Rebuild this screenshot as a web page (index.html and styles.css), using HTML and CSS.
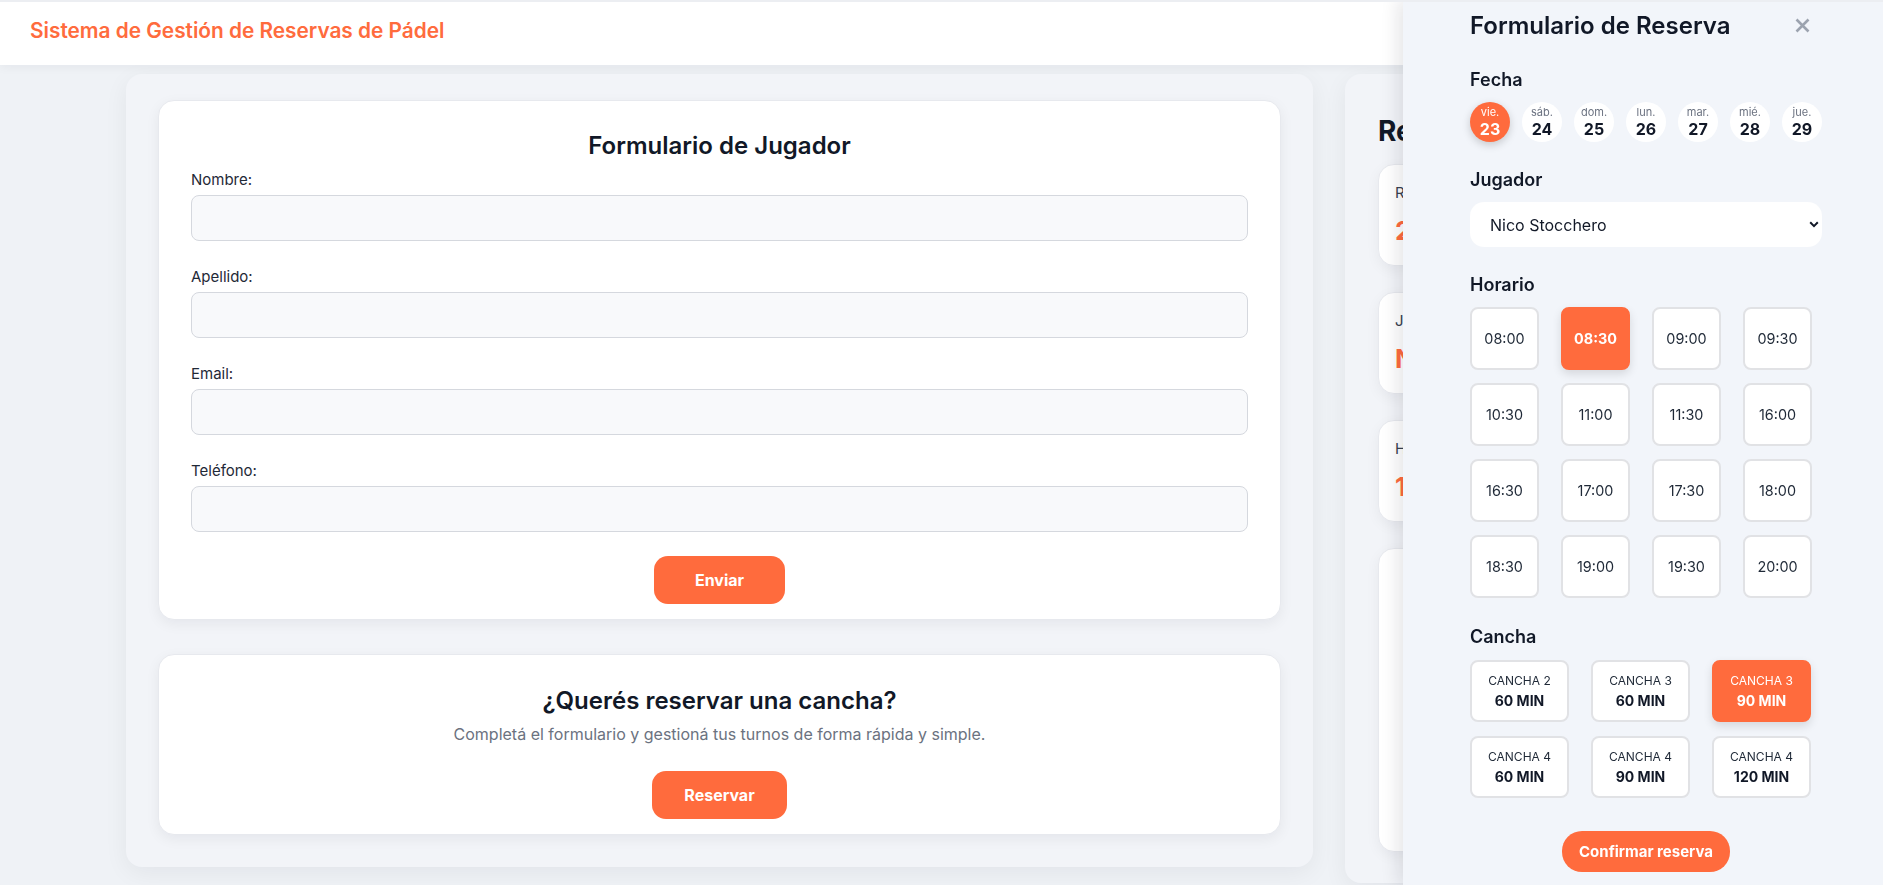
FILE: index.html
```html
<!DOCTYPE html>
<html lang="es">
<head>
<meta charset="utf-8">
<title>Sistema de Gestión de Reservas de Pádel</title>
<link rel="stylesheet" href="styles.css">
</head>
<body>
<header class="topbar">
  <h1 class="brand">Sistema de Gestión de Reservas de Pádel</h1>
</header>

<main class="layout">
  <section class="panel panel-main">
    <div class="card form-card">
      <h2 class="card-title">Formulario de Jugador</h2>
      <form class="player-form">
        <div class="field">
          <label>Nombre:</label>
          <input type="text">
        </div>
        <div class="field">
          <label>Apellido:</label>
          <input type="text">
        </div>
        <div class="field">
          <label>Email:</label>
          <input type="text">
        </div>
        <div class="field">
          <label>Teléfono:</label>
          <input type="text">
        </div>
        <div class="actions">
          <button type="button" class="btn">Enviar</button>
        </div>
      </form>
    </div>

    <div class="card cta-card">
      <h2 class="card-title">¿Querés reservar una cancha?</h2>
      <p class="cta-text">Completá el formulario y gestioná tus turnos de forma rápida y simple.</p>
      <button type="button" class="btn">Reservar</button>
    </div>
  </section>

  <aside class="panel panel-side">
    <h2 class="side-title">Resumen de reserva</h2>
    <div class="stat">
      <div class="stat-label">Reservas activas</div>
      <div class="stat-value">2</div>
    </div>
    <div class="stat">
      <div class="stat-label">Jugador</div>
      <div class="stat-value">Nico Stocchero</div>
    </div>
    <div class="stat">
      <div class="stat-label">Horario</div>
      <div class="stat-value">10:30</div>
    </div>
    <div class="stat stat-big"></div>
  </aside>
</main>

<div class="drawer">
  <div class="drawer-head">
    <h2 class="drawer-title">Formulario de Reserva</h2>
    <button type="button" class="close-btn" aria-label="Cerrar">
      <svg width="15" height="15" viewBox="0 0 15 15"><path d="M1.5 1.5L13.5 13.5M13.5 1.5L1.5 13.5" stroke="#9ca3af" stroke-width="2.6" fill="none"/></svg>
    </button>
  </div>

  <h3 class="section-label first">Fecha</h3>
  <div class="dates">
    <button type="button" class="date is-active"><span class="date-day">vie.</span><span class="date-num">23</span></button>
    <button type="button" class="date"><span class="date-day">sáb.</span><span class="date-num">24</span></button>
    <button type="button" class="date"><span class="date-day">dom.</span><span class="date-num">25</span></button>
    <button type="button" class="date"><span class="date-day">lun.</span><span class="date-num">26</span></button>
    <button type="button" class="date"><span class="date-day">mar.</span><span class="date-num">27</span></button>
    <button type="button" class="date"><span class="date-day">mié.</span><span class="date-num">28</span></button>
    <button type="button" class="date"><span class="date-day">jue.</span><span class="date-num">29</span></button>
  </div>

  <h3 class="section-label">Jugador</h3>
  <select class="player-select">
    <option>Nico Stocchero</option>
  </select>

  <h3 class="section-label">Horario</h3>
  <div class="slots">
    <button type="button" class="slot">08:00</button>
    <button type="button" class="slot is-active">08:30</button>
    <button type="button" class="slot">09:00</button>
    <button type="button" class="slot">09:30</button>
    <button type="button" class="slot">10:30</button>
    <button type="button" class="slot">11:00</button>
    <button type="button" class="slot">11:30</button>
    <button type="button" class="slot">16:00</button>
    <button type="button" class="slot">16:30</button>
    <button type="button" class="slot">17:00</button>
    <button type="button" class="slot">17:30</button>
    <button type="button" class="slot">18:00</button>
    <button type="button" class="slot">18:30</button>
    <button type="button" class="slot">19:00</button>
    <button type="button" class="slot">19:30</button>
    <button type="button" class="slot">20:00</button>
  </div>

  <h3 class="section-label court-label">Cancha</h3>
  <div class="courts">
    <button type="button" class="court"><span class="court-name">Cancha 2</span><span class="court-dur">60 min</span></button>
    <button type="button" class="court"><span class="court-name">Cancha 3</span><span class="court-dur">60 min</span></button>
    <button type="button" class="court is-active"><span class="court-name">Cancha 3</span><span class="court-dur">90 min</span></button>
    <button type="button" class="court"><span class="court-name">Cancha 4</span><span class="court-dur">60 min</span></button>
    <button type="button" class="court"><span class="court-name">Cancha 4</span><span class="court-dur">90 min</span></button>
    <button type="button" class="court"><span class="court-name">Cancha 4</span><span class="court-dur">120 min</span></button>
  </div>

  <div class="confirm-wrap">
    <button type="button" class="btn btn-confirm">Confirmar reserva</button>
  </div>
</div>
</body>
</html>
```

FILE: styles.css
```css
* {
  box-sizing: border-box;
}

html, body {
  height: 100%;
}

body {
  margin: 0;
  font-family: Inter, "Noto Sans", sans-serif;
  background: #eff2f6;
  color: #1f2937;
  overflow: hidden;
}

button, input, select {
  font-family: inherit;
}

body::before {
  content: "";
  position: fixed;
  left: 0;
  top: 0;
  right: 0;
  height: 2px;
  background: #eceef2;
  z-index: 20;
}

/* Header */
.topbar {
  height: 65px;
  padding: 18px 30px 0;
  background: #ffffff;
  box-shadow: 0 2px 10px rgba(15, 23, 42, 0.05);
  position: relative;
  z-index: 1;
}

.brand {
  margin: 0;
  font-size: 20.8px;
  line-height: 25px;
  font-weight: 600;
  color: #ff6b3d;
}

/* Layout */
.layout {
  display: grid;
  grid-template-columns: 1187px 412px;
  column-gap: 32px;
  align-items: start;
  padding: 9px 0 0 126px;
}

.panel {
  background: #f2f4f8;
  border-radius: 16px;
  box-shadow: 0 6px 24px rgba(15, 23, 42, 0.06);
}

.panel-main {
  padding: 26px 32px 32px;
  display: flex;
  flex-direction: column;
  gap: 34px;
}

.card {
  background: #ffffff;
  border: 1px solid #e7e9ee;
  border-radius: 16px;
  box-shadow: 0 4px 14px rgba(15, 23, 42, 0.06);
}

.form-card {
  padding: 30px 32px 15px;
}

.card-title {
  margin: 0;
  font-size: 24px;
  line-height: 29px;
  font-weight: 600;
  text-align: center;
  color: #111827;
}

.player-form {
  margin-top: 11px;
}

.field + .field {
  margin-top: 27px;
}

.field label {
  display: block;
  font-size: 15px;
  line-height: 18px;
  margin-bottom: 6px;
  color: #1f2937;
}

.field input {
  display: block;
  width: 100%;
  height: 46px;
  background: #f8f9fb;
  border: 1px solid #d5d8de;
  border-radius: 8px;
}

.actions {
  margin-top: 24px;
  display: flex;
  justify-content: center;
}

.btn {
  height: 48px;
  min-width: 131px;
  padding: 0 32px;
  border: none;
  border-radius: 14px;
  background: #ff6b3d;
  color: #ffffff;
  font-size: 16px;
  font-weight: 700;
  cursor: pointer;
}

.cta-card {
  padding: 31px 32px 15px;
  text-align: center;
}

.cta-text {
  margin: 7px 0 25px;
  font-size: 16px;
  line-height: 24px;
  color: #6b7280;
}

/* Side panel */
.panel-side {
  padding: 40px 32px 31px 33px;
}

.side-title {
  margin: 0 0 16px;
  font-size: 28px;
  line-height: 34px;
  font-weight: 700;
  color: #111827;
  white-space: nowrap;
}

.stat {
  background: #ffffff;
  border: 1px solid #e7e9ee;
  border-radius: 16px;
  padding: 18px 16px;
  margin-bottom: 26px;
  box-shadow: 0 4px 14px rgba(15, 23, 42, 0.05);
}

.stat-label {
  font-size: 15px;
  line-height: 20px;
  margin-bottom: 12px;
  color: #374151;
}

.stat-value {
  font-size: 26px;
  line-height: 32px;
  font-weight: 700;
  color: #ff6b3d;
}

.stat-big {
  height: 304px;
  margin-bottom: 0;
}

/* Drawer */
.drawer {
  position: fixed;
  top: 0;
  right: 0;
  width: 480px;
  height: 100vh;
  background: #f2f5fa;
  box-shadow: -6px 0 16px rgba(15, 23, 42, 0.1);
  padding: 11px 61px 0 67px;
  z-index: 10;
}

.drawer-head {
  display: flex;
  justify-content: space-between;
  align-items: center;
  height: 29px;
}

.drawer-title {
  margin: 0;
  font-size: 24px;
  line-height: 29px;
  font-weight: 600;
  color: #111827;
}

.close-btn {
  width: 28px;
  height: 28px;
  margin-right: 6px;
  padding: 0;
  border: none;
  background: none;
  display: flex;
  align-items: center;
  justify-content: center;
}

.section-label {
  margin: 27px 0 11px;
  font-size: 18px;
  line-height: 22px;
  font-weight: 600;
  color: #111827;
}

.section-label.first {
  margin-top: 29px;
}

.section-label.court-label {
  margin-top: 28px;
  margin-bottom: 12px;
}

.dates {
  display: flex;
  gap: 12px;
}

.date {
  width: 40px;
  height: 40px;
  padding: 0;
  border: none;
  border-radius: 50%;
  background: #ffffff;
  display: flex;
  flex-direction: column;
  align-items: center;
  justify-content: center;
  gap: 3px;
}

.date-day {
  font-size: 11px;
  line-height: 11px;
  color: #6b7280;
}

.date-num {
  font-size: 16px;
  line-height: 17px;
  font-weight: 700;
  color: #111827;
}

.date.is-active {
  background: #ff6b3d;
  box-shadow: 0 3px 8px rgba(0, 0, 0, 0.18);
}

.date.is-active .date-day,
.date.is-active .date-num {
  color: #ffffff;
}

.player-select {
  display: block;
  width: 100%;
  height: 45px;
  padding: 0 30px 0 20px;
  border: none;
  border-radius: 14px;
  background-color: #ffffff;
  background-image: url("data:image/svg+xml,%3Csvg xmlns='http://www.w3.org/2000/svg' width='10' height='7' viewBox='0 0 10 7'%3E%3Cpath d='M1.2 1.3L5 5.1L8.8 1.3' fill='none' stroke='%23111827' stroke-width='2'/%3E%3C/svg%3E");
  background-repeat: no-repeat;
  background-position: right 3px center;
  appearance: none;
  -webkit-appearance: none;
  font-size: 16px;
  color: #111827;
}

.slots {
  display: grid;
  grid-template-columns: repeat(4, 69px);
  grid-auto-rows: 63px;
  column-gap: 22px;
  row-gap: 13px;
}

.slot {
  border: 2px solid #e1e2e5;
  border-radius: 8px;
  background: #ffffff;
  font-size: 14.4px;
  color: #1f2937;
  padding: 0;
}

.slot.is-active {
  background: #ff6b3d;
  border-color: #ff6b3d;
  color: #ffffff;
  font-weight: 700;
  box-shadow: 0 4px 10px rgba(0, 0, 0, 0.12);
}

.courts {
  display: grid;
  grid-template-columns: repeat(3, 99px);
  grid-auto-rows: 62px;
  column-gap: 22px;
  row-gap: 14px;
}

.court {
  border: 2px solid #e1e2e5;
  border-radius: 8px;
  background: #ffffff;
  padding: 0;
  display: flex;
  flex-direction: column;
  align-items: center;
  justify-content: center;
  gap: 4px;
  color: #1f2937;
  text-transform: uppercase;
}

.court-name {
  font-size: 12px;
  line-height: 15px;
}

.court-dur {
  font-size: 14px;
  line-height: 17px;
  font-weight: 700;
  color: #111827;
}

.court.is-active {
  background: #ff6b3d;
  border-color: #ff6b3d;
  box-shadow: 0 4px 10px rgba(0, 0, 0, 0.12);
}

.court.is-active .court-name,
.court.is-active .court-dur {
  color: #ffffff;
}

.confirm-wrap {
  margin-top: 33px;
  display: flex;
  justify-content: center;
}

.btn-confirm {
  height: 41px;
  min-width: 0;
  padding: 0 17px;
  border-radius: 20px;
  font-size: 15px;
}
```
